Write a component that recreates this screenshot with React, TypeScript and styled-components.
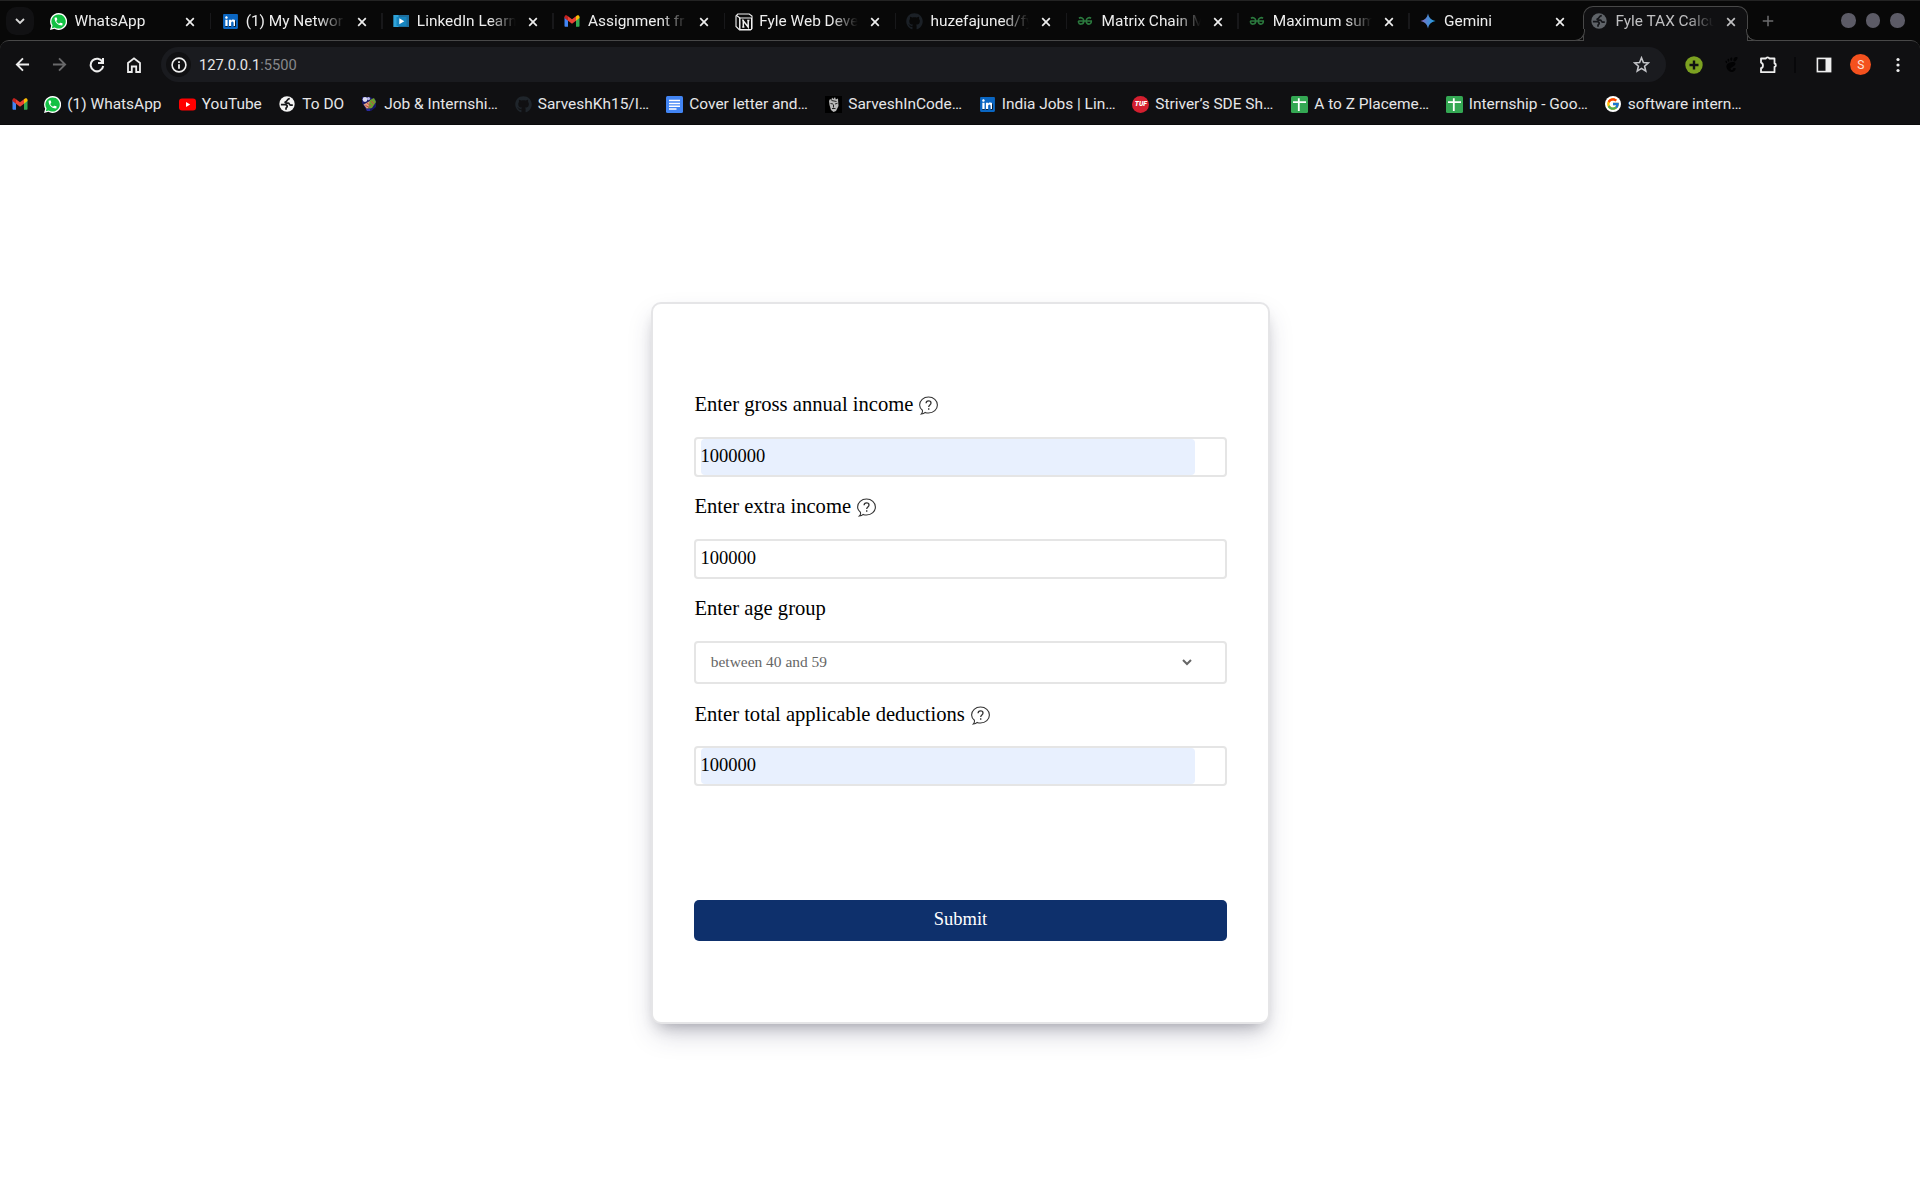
import React from "react";
import styled, { createGlobalStyle } from "styled-components";
import { FaGithub, FaLinkedin } from "react-icons/fa";
import { SiGnome } from "react-icons/si";
import { FcGoogle } from "react-icons/fc";

const GlobalStyle = createGlobalStyle`
  * { box-sizing: border-box; }
  body { margin: 0; background: #fff; overflow: hidden; }
`;

const line = "#484848";

const Window = styled.div`
  display: flex;
  flex-direction: column;
  height: 1200px;
  width: 1920px;
  overflow: hidden;
  font-family: Roboto, "Liberation Sans", sans-serif;
`;

/* ---------- tab strip ---------- */
const TabStrip = styled.div`
  display: flex;
  height: 40px;
  flex: none;
  background: #080808;
  border-top: 1px solid #232323;
`;

const TabSearch = styled.button`
  width: 28px;
  height: 28px;
  margin: 6px 5.3px 0 6px;
  padding: 0;
  border: 0;
  border-radius: 10px;
  background: #111113;
  color: #d8d8d8;
  display: grid;
  place-items: center;
  flex: none;
`;

const Tab = styled.div<{ $active?: boolean; $last?: boolean }>`
  position: relative;
  display: flex;
  align-items: center;
  width: 171.2px;
  height: 39px;
  padding: 0 12px 0 ${(p) => (p.$active ? 11.2 : 10.9)}px;
  flex: none;
  color: ${(p) => (p.$active ? "#c0c0c2" : "#eeeeee")};
  z-index: ${(p) => (p.$active ? 2 : 0)};
  &::after {
    content: "";
    display: ${(p) => (p.$active || p.$last ? "none" : "block")};
    position: absolute;
    right: -1px;
    top: 12px;
    width: 1.5px;
    height: 16px;
    background: #18181a;
  }
`;

const ActiveShape = styled.div`
  position: absolute;
  left: 3px;
  right: 3.6px;
  top: 5px;
  bottom: -1px;
  background: #101012;
  border: 1px solid ${line};
  border-bottom: 0;
  border-radius: 10px 10px 0 0;
  &::before,
  &::after {
    content: "";
    position: absolute;
    bottom: 0;
    width: 11px;
    height: 11px;
    border-bottom: 1px solid ${line};
    background: #080808;
  }
  &::before {
    left: -11px;
    border-right: 1px solid ${line};
    border-bottom-right-radius: 10px;
  }
  &::after {
    right: -11px;
    border-left: 1px solid ${line};
    border-bottom-left-radius: 10px;
  }
`;

const IconSlot = styled.span<{ $size?: number }>`
  position: relative;
  display: grid;
  place-items: center;
  width: ${(p) => p.$size ?? 16}px;
  height: ${(p) => p.$size ?? 16}px;
  flex: none;
  svg { display: block; }
`;

const TabTitle = styled.span`
  position: relative;
  margin-left: 8.3px;
  width: 101px;
  flex: none;
  overflow: hidden;
  white-space: nowrap;
  font-size: 15.4px;
  line-height: 20px;
  mask-image: linear-gradient(to right, #000 72%, transparent 98%);
`;

const TabClose = styled.button`
  position: relative;
  margin: 2px 0 0 auto;
  width: 16px;
  height: 16px;
  padding: 0;
  border: 0;
  background: none;
  color: inherit;
  display: grid;
  place-items: center;
`;

const NewTab = styled.button`
  width: 28px;
  height: 28px;
  margin: 6px auto 0 2.8px;
  padding: 0;
  border: 0;
  background: none;
  color: #6c6c6e;
  display: grid;
  place-items: center;
`;

const WindowDots = styled.div`
  display: flex;
  align-items: center;
  gap: 10px;
  margin-right: 15.5px;
  height: 39px;
`;

const Dot = styled.span`
  width: 14.5px;
  height: 14.5px;
  border-radius: 50%;
  background: #5c5b66;
`;

/* ---------- toolbar ---------- */
const ChromeBody = styled.div`
  flex: none;
  height: 85px;
  background: #080808;
`;

const ChromeInner = styled.div`
  height: 85px;
  background: #101012;
  border-top: 1px solid ${line};
  border-bottom: 1px solid #0a0a0b;
  border-radius: 9px 9px 0 0;
`;

const Toolbar = styled.div`
  display: flex;
  align-items: center;
  height: 35px;
  margin-top: 6px;
  padding: 0 9px 0 8.5px;
`;

const NavButton = styled.button<{ $color?: string; $w?: number }>`
  width: ${(p) => p.$w ?? 37.2}px;
  height: 28px;
  padding: 0;
  border: 0;
  background: none;
  color: ${(p) => p.$color ?? "#eeeeee"};
  display: grid;
  place-items: center;
  flex: none;
`;

const AddressBar = styled.div`
  display: flex;
  align-items: center;
  width: 1505px;
  height: 35px;
  margin-left: 4px;
  padding: 0 16px 0 5.5px;
  border-radius: 18px;
  background: #1a1b1f;
  flex: none;
`;

const SiteInfo = styled.span`
  width: 25px;
  height: 25px;
  border-radius: 50%;
  background: #101012;
  color: #eee;
  display: grid;
  place-items: center;
`;

const Url = styled.span`
  flex: 1;
  margin-left: 8px;
  font-size: 14.7px;
  line-height: 20px;
  color: #e6e6e8;
  span { color: #87888c; }
`;

const Extensions = styled.div`
  display: flex;
  align-items: center;
  margin-left: 10px;
`;

const Divider = styled.span`
  width: 2px;
  height: 16px;
  margin: 0 9px 0 7px;
  background: #08080a;
`;

const Avatar = styled.span`
  display: grid;
  place-items: center;
  width: 21px;
  height: 21px;
  margin: 0 8px;
  border-radius: 50%;
  background: #f4511e;
  color: #fbe4dc;
  font-size: 12px;
`;

/* ---------- bookmarks ---------- */
const Bookmarks = styled.div`
  display: flex;
  align-items: center;
  height: 43px;
  padding-left: 12.3px;
`;

const Bookmark = styled.a<{ $w: number }>`
  display: flex;
  align-items: center;
  width: ${(p) => p.$w}px;
  flex: none;
  gap: 7px;
  color: #e6e6e8;
  font-size: 15.45px;
  line-height: 20px;
  white-space: nowrap;
`;

/* ---------- page ---------- */
const Page = styled.main`
  flex: 1;
  display: flex;
  justify-content: center;
  padding: 177px 0 0 1px;
  background: #fff;
  font-family: "Liberation Serif", "Times New Roman", serif;
`;

const Card = styled.form`
  width: 619px;
  height: 722px;
  padding: 84px 41px 0;
  border: 2px solid #e5e5e7;
  border-radius: 10px;
  background: #fff;
  box-shadow: rgba(50, 50, 93, 0.25) 0 13px 27px -5px, rgba(0, 0, 0, 0.3) 0 8px 16px -8px;
`;

const Field = styled.div<{ $gap: number }>`
  margin-bottom: ${(p) => p.$gap}px;
`;

const Label = styled.label<{ $top?: number }>`
  display: flex;
  align-items: flex-start;
  height: 49px;
  padding: ${(p) => p.$top ?? 0}px 0 0 0.4px;
  font-size: 20.6px;
  line-height: 32px;
  color: #000;
  svg { margin: 8px 0 0 6px; }
`;

const InputBox = styled.div`
  height: 40px;
  padding: 0 30px 0 5px;
  border: 2px solid #e5e5e5;
  border-radius: 4px;
`;

const Input = styled.input<{ $filled?: boolean }>`
  display: block;
  width: 494px;
  height: 36px;
  padding: 0 0 1px;
  border: 0;
  border-radius: 4px;
  outline: 0;
  background: ${(p) => (p.$filled ? "#e8f0fe" : "transparent")};
  font: 18.5px "Liberation Serif", "Times New Roman", serif;
  text-indent: -0.4px;
  color: #000;
`;

const Select = styled.div`
  display: flex;
  align-items: center;
  justify-content: space-between;
  height: 43px;
  padding: 0 33px 1px 14.8px;
  border: 2px solid #e5e5e5;
  border-radius: 4px;
  font-size: 15.45px;
  color: #666;
`;

const Submit = styled.button`
  display: block;
  width: 533px;
  height: 41px;
  margin-top: 114px;
  padding: 0 0 2px;
  border: 0;
  border-radius: 5px;
  background: #0e306c;
  color: #fff;
  font: 18.5px "Liberation Serif", "Times New Roman", serif;
`;

/* ---------- icons ---------- */
const WhatsApp = () => (
  <svg width="17" height="17" viewBox="0 0 24 24">
    <path d="M12 0a12 12 0 0 0-10.300 18L0 24l6.200-1.600A12 12 0 1 0 12 0z" fill="#fff" />
    <path d="M12 2a10 10 0 0 0-8.400 15.400L2.600 21.400l4.100-1.100A10 10 0 1 0 12 2z" fill="#12c143" />
    <path
      transform="translate(4.600 4.500) scale(.62)"
      d="M6.620 10.790c1.440 2.830 3.760 5.140 6.590 6.590l2.200-2.200c.27-.27.67-.36 1.020-.24 1.120.37 2.330.57 3.570.57.55 0 1 .45 1 1V20c0 .55-.45 1-1 1-9.390 0-17-7.610-17-17 0-.55.45-1 1-1h3.500c.55 0 1 .45 1 1 0 1.250.2 2.450.57 3.570.11.35.03.74-.25 1.020z"
      fill="#fff"
    />
  </svg>
);

const LinkedInWrap = styled.span`
  display: grid;
  place-items: center;
  width: 15px;
  height: 15px;
  background: linear-gradient(#fff, #fff) center / 11px 11px no-repeat;
`;
const LinkedIn = () => (
  <LinkedInWrap>
    <FaLinkedin size={17} color="#0a66c2" />
  </LinkedInWrap>
);

const Learning = () => (
  <svg width="16" height="16" viewBox="0 0 16 16">
    <rect x="0.500" y="2" width="15.500" height="12" fill="#1d6f9f" />
    <rect x="0.500" y="2" width="5" height="12" fill="#2fa3d8" />
    <rect x="3.500" y="4" width="10" height="9" fill="#1585c0" />
    <path d="M6.300 5.300v6l5-3z" fill="#fff" />
  </svg>
);

const Gmail = () => (
  <svg width="16" height="16" viewBox="0 0 16 16">
    <path d="M.5 4v9.100c0 .4.300.700.700.700H4V7.200z" fill="#4285f4" />
    <path d="M15.500 4v9.100c0 .4-.300.700-.700.700H12V7.200z" fill="#34a853" />
    <path d="M12 3.200v4.500l3.500-2.600V3.700c0-1.300-1.500-2-2.500-1.200z" fill="#fbbc04" />
    <path d="M.5 5.100L4 7.700V3.200L3 2.500C2 1.700.5 2.400.5 3.700z" fill="#c5221f" />
    <path d="M4 7.700V3.200l4 3 4-3v4.500l-4 3z" fill="#ea4335" />
  </svg>
);

const Notion = () => (
  <svg width="18" height="18" viewBox="0 0 18 18">
    <path d="M1 2.800L2.800 1h11.400L17 3v12.500L15.500 17H4.500L1 13.500z" fill="#0a0a0a" stroke="#f2f2f2" strokeWidth="1.100" />
    <path d="M1.500 2.500l3.200 2.300V16.500" fill="none" stroke="#f2f2f2" strokeWidth="1.100" />
    <path d="M5 5h11.500v11.500H5z" fill="#0a0a0a" stroke="#f2f2f2" strokeWidth="1" />
    <path d="M8.300 14V7.800L13.200 14V7.500M7.200 7.600h1.800M12.200 7.500h2.200M7.200 14h2.200" fill="none" stroke="#f2f2f2" strokeWidth="1.500" />
  </svg>
);

const Gemini = () => (
  <svg width="16" height="16" viewBox="0 0 16 16">
    <defs>
      <linearGradient id="gem" x1="0" y1="0" x2="1" y2="0">
        <stop offset="0" stopColor="#9168c0" />
        <stop offset=".4" stopColor="#5684d1" />
        <stop offset="1" stopColor="#1ba1e3" />
      </linearGradient>
    </defs>
    <path d="M8 .5C9 5 11 7 15.500 8 11 9 9 11 8 15.500 7 11 5 9 .5 8 5 7 7 5 8 .5z" fill="url(#gem)" />
  </svg>
);

const Geeks = () => (
  <svg width="16" height="16" viewBox="0 0 16 16" fill="none" stroke="#2b7a3e" strokeWidth="1.600">
    <path d="M2 5.300C3.500 4 6.800 4.600 6.800 8c0 3.800-4.800 4-5.300 1.200C1.400 8.400 1.600 8 2 8H14.300c.5 3.800-5.100 4.500-5.100 0 0-3.400 3.300-4 4.800-2.700" />
  </svg>
);

const Globe = ({ color, land }: { color: string; land: string }) => (
  <svg width="16" height="16" viewBox="0 0 16 16" fill="none" stroke={land}>
    <circle cx="8" cy="8" r="7.700" fill={color} stroke="none" />
    <path d="M10.800 2.600C8 2.700 8.800 5 6.800 5.700 5.500 6.200 6.300 7.200 7.500 7.200h1.800c1.200 0 1 2 2.500 2h2" strokeWidth="1.700" />
    <path d="M1.900 8.700h4.300c1.300 0 2 .7 2 1.700s-1.200.9-1.200 2v1.400" strokeWidth="1.700" />
  </svg>
);

const Bouquet = () => (
  <svg width="16" height="16" viewBox="0 0 16 16">
    <path d="M1 1h8l6 3v7l-5 4H6L1 7z" fill="#171766" />
    <circle cx="4" cy="3.500" r="2.400" fill="#dcdcf4" />
    <circle cx="7.500" cy="2.600" r="1.600" fill="#b8b8e8" />
    <path d="M2.500 8.500L9 5l2 3-5 5z" fill="#e0a080" />
    <path d="M9 4l4-2 2 4-4 6-4 1z" fill="#6f9c2e" />
    <path d="M4.500 9.500l4 2M6 7l4 3M10 5l3 3" stroke="#c04848" strokeWidth="1" />
    <path d="M5 13l4-.5v2.500H6z" fill="#2a2a9c" />
  </svg>
);

const Docs = () => (
  <svg width="17" height="17" viewBox="0 0 17 17">
    <rect width="17" height="17" rx="1.500" fill="#4285f4" />
    <path d="M3 4.500h11M3 7.500h11M3 10.200h11M3 13h7.500" stroke="#fff" strokeWidth="1.500" />
  </svg>
);

const Sheets = () => (
  <svg width="17" height="17" viewBox="0 0 17 17">
    <rect width="17" height="17" rx="1.500" fill="#34a853" />
    <path d="M2 6.200h13M7.800 2.300V15" stroke="#fff" strokeWidth="1.800" />
  </svg>
);

const Mask = () => (
  <svg width="17" height="17" viewBox="0 0 17 17">
    <rect width="17" height="17" fill="#000" />
    <path d="M4 5l1-2 1.500 1L7 1.500 8.500 3 10 1l.8 2.500L13 2.500 13.200 6l.3 4-2.500 5-2.500 1L6 14 4.500 9z" fill="#b8b8b8" />
    <path d="M5.500 7.500l2.500.5M10 8l2.500-.7M8.500 8.500v3M7 12.500h3.500M6.500 4.500l5 1" stroke="#222" strokeWidth="1" />
  </svg>
);

const Tuf = styled.span`
  display: grid;
  place-items: center;
  width: 17px;
  height: 17px;
  border-radius: 50%;
  background: #d41f2f;
  color: #fff;
  font: italic 900 6.800px/17px Roboto, sans-serif;
`;

const WhiteDisc = styled.span`
  display: grid;
  place-items: center;
  width: 16.500px;
  height: 16.500px;
  border-radius: 50%;
  background: #fff;
`;

const Cross = () => (
  <svg width="10" height="10" viewBox="0 0 10 10" stroke="currentColor" strokeWidth="1.700">
    <path d="M1.200 1.200l7.600 7.600M8.800 1.200L1.200 8.800" />
  </svg>
);

const Chevron = ({ w = 10, s = 1.8 }: { w?: number; s?: number }) => (
  <svg width={w} height={w} viewBox="0 0 10 10" fill="none" stroke="currentColor" strokeWidth={s}>
    <path d="M1 3l4 4 4-4" />
  </svg>
);

const Stroke = ({ d, size = 16, w = 1.8, children }: { d?: string; size?: number; w?: number; children?: React.ReactNode }) => (
  <svg width={size} height={size} viewBox="0 0 16 16" fill="none" stroke="currentColor" strokeWidth={w}>
    {d && <path d={d} />}
    {children}
  </svg>
);

const HelpIcon = () => (
  <svg width="19" height="19" viewBox="0 0 19 19" fill="none" stroke="#333">
    <path d="M3.400 14.200C1.600 12.800.6 11 .6 9 .6 4.500 4.500 1 9.500 1s8.900 3.500 8.900 8-3.900 8-8.900 8c-1.200 0-2.300-.2-3.300-.6-.9.900-2 1.500-3.800 1.600 1-.9 1.400-2.300 1-3.800z" strokeWidth="1.100" />
    <path d="M7.100 7.300c0-1.600 1-2.500 2.500-2.500 1.400 0 2.400.8 2.400 2.100 0 2-2.300 2-2.300 4.100" strokeWidth="1.300" />
    <path d="M9.700 12.300v1.500" strokeWidth="1.400" />
  </svg>
);

const tabs = [
  { title: "WhatsApp", icon: <WhatsApp /> },
  { title: "(1) My Networ", icon: <LinkedIn /> },
  { title: "LinkedIn Learn", icon: <Learning /> },
  { title: "Assignment fr", icon: <Gmail /> },
  { title: "Fyle Web Deve", icon: <Notion /> },
  { title: "huzefajuned/fy", icon: <FaGithub size={17} color="#1b2026" /> },
  { title: "Matrix Chain M", icon: <Geeks /> },
  { title: "Maximum sum", icon: <Geeks /> },
  { title: "Gemini", icon: <Gemini /> },
  { title: "Fyle TAX Calcu", icon: <Globe color="#5f6368" land="#15161a" />, active: true },
];

const bookmarks = [
  { w: 32, icon: <Gmail /> },
  { w: 134.5, icon: <WhatsApp />, text: "(1) WhatsApp" },
  {
    w: 100.5,
    text: "YouTube",
    icon: (
      <svg width="17" height="17" viewBox="0 0 17 17">
        <rect y="2.500" width="17" height="12" rx="3" fill="#f00" />
        <path d="M7 6v5l4.200-2.500z" fill="#fff" />
      </svg>
    ),
  },
  { w: 82, icon: <Globe color="#f4f4f4" land="#15161a" />, text: "To DO" },
  { w: 153.5, icon: <Bouquet />, text: "Job & Internshi…" },
  { w: 151.5, icon: <FaGithub size={17} color="#1f252b" />, text: "SarveshKh15/I…" },
  { w: 159, icon: <Docs />, text: "Cover letter and…" },
  { w: 153.5, icon: <Mask />, text: "SarveshInCode…" },
  { w: 153.5, icon: <LinkedIn />, text: "India Jobs | Lin…" },
  { w: 159, icon: <Tuf>TUF</Tuf>, text: "Striver’s SDE Sh…" },
  { w: 154.5, icon: <Sheets />, text: "A to Z Placeme…" },
  { w: 159, icon: <Sheets />, text: "Internship - Goo…" },
  { w: 160, icon: <WhiteDisc><FcGoogle size={14} /></WhiteDisc>, text: "software intern…" },
];

export default function App() {
  return (
    <Window>
      <GlobalStyle />
      <TabStrip>
        <TabSearch><Chevron /></TabSearch>
        {tabs.map((t, i) => (
          <Tab key={t.title} $active={t.active} $last={i === 8}>
            {t.active && <ActiveShape />}
            <IconSlot>{t.icon}</IconSlot>
            <TabTitle>{t.title}</TabTitle>
            <TabClose><Cross /></TabClose>
          </Tab>
        ))}
        <NewTab><Stroke size={12} w={2} d="M8 1v14M1 8h14" /></NewTab>
        <WindowDots><Dot /><Dot /><Dot /></WindowDots>
      </TabStrip>
      <ChromeBody>
        <ChromeInner>
          <Toolbar>
            <NavButton $w={28}><Stroke size={15} w={2} d="M15 8H2.200M8.500 1.500L2 8l6.500 6.500" /></NavButton>
            <NavButton $w={46} $color="#69696b"><Stroke size={15} w={2} d="M1 8h12.800M7.500 1.500L14 8l-6.500 6.500" /></NavButton>
            <NavButton $w={28}><Stroke w={2} d="M13.600 5.200A6.300 6.300 0 1 0 14.200 9M14 1v5H9" /></NavButton>
            <NavButton $w={46}><Stroke d="M2 15V6l6-4.600L14 6v9h-3.800V9.500H5.800V15z" /></NavButton>
            <AddressBar>
              <SiteInfo>
                <Stroke w={1.600}>
                  <circle cx="8" cy="8" r="6.900" />
                  <path d="M8 7.200v4.500M8 4.200v1.700" strokeWidth="1.800" />
                </Stroke>
              </SiteInfo>
              <Url>127.0.0.1<span>:5500</span></Url>
              <NavButton $w={17} $color="#c4c5c9">
                <Stroke size={17} w={1.500} d="M8 1.700l1.800 4.400 4.700.4-3.600 3.100 1.100 4.600L8 11.700l-4 2.500 1.100-4.600L1.500 6.500l4.700-.4z" />
              </NavButton>
            </AddressBar>
            <Extensions>
              <NavButton $color="#7a9d1d">
                <svg width="18" height="18" viewBox="0 0 18 18">
                  <circle cx="9" cy="9" r="8.700" fill="#7ca121" />
                  <path d="M9 4.500v9M4.500 9h9" stroke="#101012" strokeWidth="2.400" />
                </svg>
              </NavButton>
              <NavButton $color="#020203"><SiGnome size={15} /></NavButton>
              <NavButton>
                <svg width="18" height="18" viewBox="0 0 18 18" fill="none" stroke="currentColor" strokeWidth="1.800">
                  <path d="M2 2.500H7c.2-1.600 3-1.600 3.200 0h5.300v5c1.800.4 1.800 3 0 3.400V16.200H2v-4c2.600-.6 2.600-5 0-5.600z" strokeLinejoin="round" />
                </svg>
              </NavButton>
              <Divider />
              <NavButton>
                <svg width="16" height="16" viewBox="0 0 16 16">
                  <rect x="1.400" y="1.400" width="13.200" height="13.200" fill="none" stroke="currentColor" strokeWidth="1.600" />
                  <path d="M9.500 1h5.500v14H9.500z" fill="currentColor" />
                </svg>
              </NavButton>
              <Avatar>S</Avatar>
              <NavButton>
                <svg width="16" height="16" viewBox="0 0 16 16" fill="currentColor">
                  <circle cx="8" cy="2.500" r="1.600" /><circle cx="8" cy="8" r="1.600" /><circle cx="8" cy="13.500" r="1.600" />
                </svg>
              </NavButton>
            </Extensions>
          </Toolbar>
          <Bookmarks>
            {bookmarks.map((b, i) => (
              <Bookmark key={i} $w={b.w}>
                <IconSlot>{b.icon}</IconSlot>
                {b.text}
              </Bookmark>
            ))}
          </Bookmarks>
        </ChromeInner>
      </ChromeBody>
      <Page>
        <Card onSubmit={(e) => e.preventDefault()}>
          <Field $gap={13}>
            <Label>Enter gross annual income<HelpIcon /></Label>
            <InputBox><Input $filled defaultValue="1000000" /></InputBox>
          </Field>
          <Field $gap={13}>
            <Label>Enter extra income<HelpIcon /></Label>
            <InputBox><Input defaultValue="100000" /></InputBox>
          </Field>
          <Field $gap={13}>
            <Label>Enter age group</Label>
            <Select>between 40 and 59<Chevron s={2} /></Select>
          </Field>
          <Field $gap={0}>
            <Label $top={1}>Enter total applicable deductions<HelpIcon /></Label>
            <InputBox><Input $filled defaultValue="100000" /></InputBox>
          </Field>
          <Submit>Submit</Submit>
        </Card>
      </Page>
    </Window>
  );
}
